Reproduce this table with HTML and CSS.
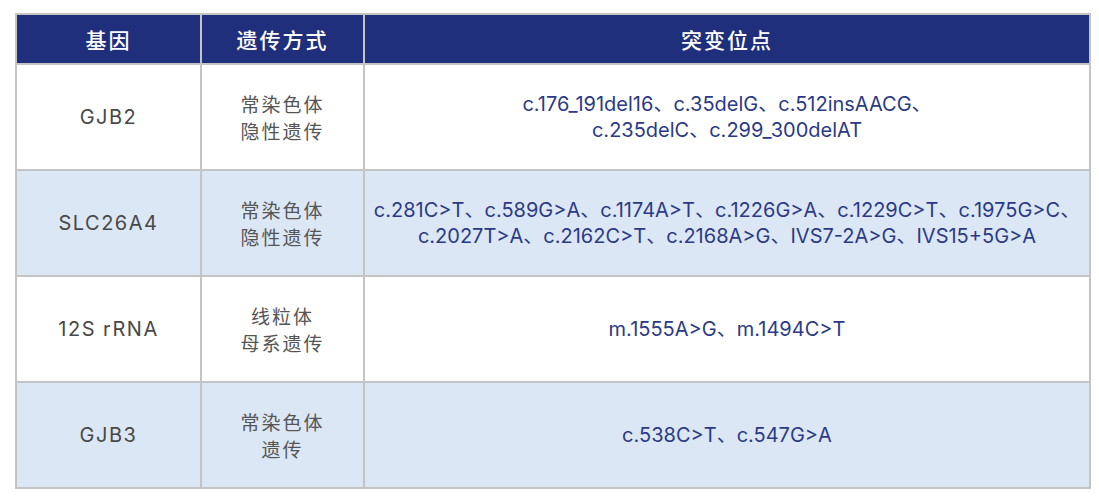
FILE: index.html
```html
<!DOCTYPE html>
<html lang="zh">
<head>
<meta charset="utf-8">
<link rel="stylesheet" href="styles.css">
</head>
<body>
<table class="gene-table">
  <colgroup>
    <col class="c1"><col class="c2"><col class="c3">
  </colgroup>
  <thead>
    <tr><th>基因</th><th>遗传方式</th><th>突变位点</th></tr>
  </thead>
  <tbody>
    <tr>
      <td class="gene">GJB2</td>
      <td class="mode">常染色体<br>隐性遗传</td>
      <td class="sites">c.176_191del16、c.35delG、c.512insAACG、<br>c.235delC、c.299_300delAT</td>
    </tr>
    <tr class="alt">
      <td class="gene">SLC26A4</td>
      <td class="mode">常染色体<br>隐性遗传</td>
      <td class="sites">c.281C&gt;T、c.589G&gt;A、c.1174A&gt;T、c.1226G&gt;A、c.1229C&gt;T、c.1975G&gt;C、<br>c.2027T&gt;A、c.2162C&gt;T、c.2168A&gt;G、IVS7-2A&gt;G、IVS15+5G&gt;A</td>
    </tr>
    <tr>
      <td class="gene">12S rRNA</td>
      <td class="mode">线粒体<br>母系遗传</td>
      <td class="sites">m.1555A&gt;G、m.1494C&gt;T</td>
    </tr>
    <tr class="alt">
      <td class="gene">GJB3</td>
      <td class="mode">常染色体<br>遗传</td>
      <td class="sites">c.538C&gt;T、c.547G&gt;A</td>
    </tr>
  </tbody>
</table>
</body>
</html>
```
FILE: styles.css
```css
html, body {
  margin: 0;
  padding: 0;
  background: #ffffff;
}
body {
  padding: 13px 0 0 15px;
  font-family: Inter, "Noto Sans CJK SC", sans-serif;
}
.gene-table {
  border-collapse: collapse;
  width: 1074px;
  table-layout: fixed;
  border: 2px solid #c4c4c4;
}
.c1 { width: 185px; }
.c2 { width: 163px; }
.c3 { width: 726px; }
.gene-table th,
.gene-table td {
  border: 2px solid #c4c4c4;
  text-align: center;
  vertical-align: middle;
  padding: 0;
}
.gene-table th {
  background: #1f2f7b;
  color: #ffffff;
  height: 48px;
  font-family: "Noto Sans CJK SC", sans-serif;
  font-size: 21px;
  font-weight: 500;
  letter-spacing: 2px;
}
.gene-table td {
  height: 104px;
}
.alt td {
  background: #dce7f5;
}
.gene {
  color: #484848;
  font-size: 20px;
  letter-spacing: 1.5px;
}
.mode {
  color: #555555;
  font-family: "Noto Sans CJK SC", sans-serif;
  font-size: 19px;
  line-height: 27px;
  letter-spacing: 2px;
}
.sites {
  color: #2b3a86;
  font-size: 20px;
  font-weight: 400;
  line-height: 26px;
}
```
